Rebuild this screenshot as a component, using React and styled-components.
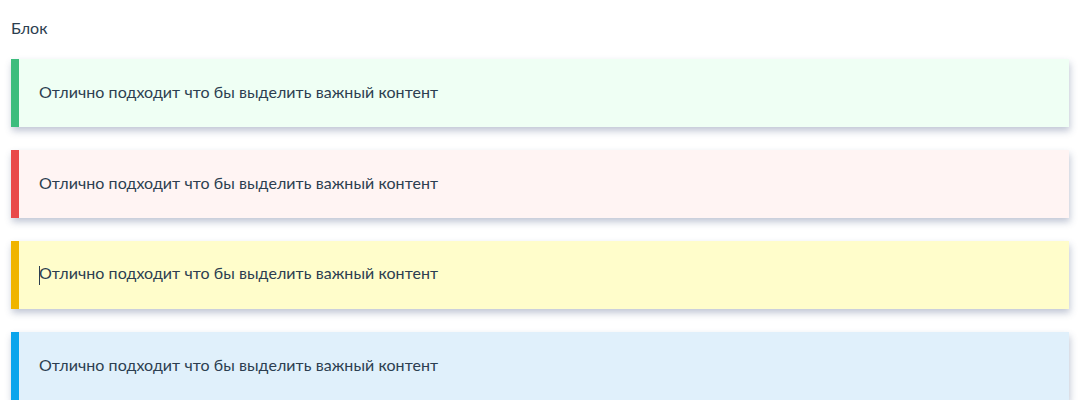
import styled, { createGlobalStyle } from "styled-components";

const GlobalStyle = createGlobalStyle`
  body {
    margin: 0;
    background: #ffffff;
    font-family: Lato, "Open Sans", sans-serif;
    color: #2c3e50;
  }
`;

const Page = styled.div`
  padding: 18px 23px 0 11px;
`;

const Label = styled.div`
  font-size: 16px;
  line-height: 20px;
  margin-bottom: 21px;
`;

const List = styled.div`
  display: flex;
  flex-direction: column;
  gap: 23px;
`;

const tones = {
  success: { bar: "#3dbd7d", bg: "#effff4" },
  danger: { bar: "#e9494a", bg: "#fff4f3" },
  warning: { bar: "#f0b400", bg: "#fffdcb" },
  info: { bar: "#0ba5ec", bg: "#e0f0fb" },
};

const Callout = styled.div`
  display: flex;
  align-items: center;
  height: 68px;
  box-sizing: border-box;
  padding: 0 20px 2px;
  border-left: 8px solid ${(p) => tones[p.$tone].bar};
  background: ${(p) => tones[p.$tone].bg};
  box-shadow: 1px 4px 7px rgba(50, 70, 115, 0.3);
  font-size: 16px;
  line-height: 20px;
  letter-spacing: 0.06px;
`;

const Caret = styled.span`
  display: inline-block;
  width: 1px;
  height: 19px;
  background: #2c3e50;
  vertical-align: middle;
  margin-right: -1px;
`;

const TEXT = "Отлично подходит что бы выделить важный контент";

export default function App() {
  return (
    <>
      <GlobalStyle />
      <Page>
        <Label>Блок</Label>
        <List>
          <Callout $tone="success">{TEXT}</Callout>
          <Callout $tone="danger">{TEXT}</Callout>
          <Callout $tone="warning">
            <span>
              <Caret />
              {TEXT}
            </span>
          </Callout>
          <Callout $tone="info">{TEXT}</Callout>
        </List>
      </Page>
    </>
  );
}
